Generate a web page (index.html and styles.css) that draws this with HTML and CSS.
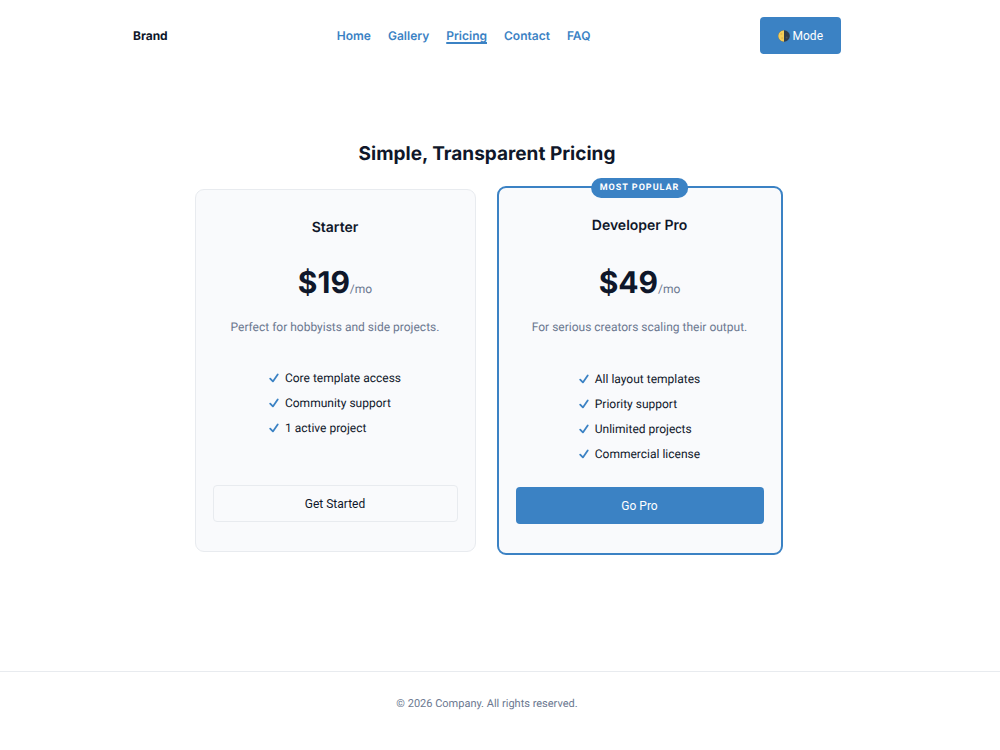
FILE: index.html
```html
<!DOCTYPE html>
<html lang="en">
<head>
<meta charset="utf-8">
<meta name="viewport" content="width=device-width, initial-scale=1">
<title>Pricing</title>
<link rel="stylesheet" href="styles.css">
</head>
<body>
<svg class="defs" width="0" height="0" aria-hidden="true">
  <symbol id="check" viewBox="0 0 10 10"><path d="M1.2 5.6 3.9 8.4 8.7 1.5" fill="none" stroke="currentColor" stroke-width="1.8" stroke-linecap="round" stroke-linejoin="round"/></symbol>
</svg>
<header class="header">
  <div class="header-inner">
    <strong class="brand">Brand</strong>
    <nav class="nav" aria-label="Main">
      <a href="#home">Home</a>
      <a href="#gallery">Gallery</a>
      <a href="#pricing" class="active" aria-current="page">Pricing</a>
      <a href="#contact">Contact</a>
      <a href="#faq">FAQ</a>
    </nav>
    <button class="btn btn-primary mode" type="button">
      <svg class="moon" viewBox="0 0 12 12" aria-hidden="true"><circle cx="6" cy="6" r="5.8" fill="#2f3b4c"/><path d="M6 .2a5.8 5.8 0 0 0 0 11.6z" fill="#f5cd58"/><circle cx="3.4" cy="4" r="1" fill="#e3b84c"/><circle cx="4.2" cy="8.2" r="1.1" fill="#e3b84c"/><circle cx="8.6" cy="7.6" r="1" fill="#465160"/></svg>
      Mode
    </button>
  </div>
</header>
<main class="main">
  <h1 class="title">Simple, Transparent Pricing</h1>
  <div class="plans">
    <section class="card">
      <h2 class="plan-name">Starter</h2>
      <p class="price">$19<span class="period">/mo</span></p>
      <p class="summary">Perfect for hobbyists and side projects.</p>
      <ul class="features">
        <li><svg class="check" aria-hidden="true"><use href="#check"/></svg>Core template access</li>
        <li><svg class="check" aria-hidden="true"><use href="#check"/></svg>Community support</li>
        <li><svg class="check" aria-hidden="true"><use href="#check"/></svg>1 active project</li>
      </ul>
      <button class="btn btn-outline" type="button">Get Started</button>
    </section>
    <section class="card card-featured">
      <span class="badge">MOST POPULAR</span>
      <h2 class="plan-name">Developer Pro</h2>
      <p class="price">$49<span class="period">/mo</span></p>
      <p class="summary">For serious creators scaling their output.</p>
      <ul class="features">
        <li><svg class="check" aria-hidden="true"><use href="#check"/></svg>All layout templates</li>
        <li><svg class="check" aria-hidden="true"><use href="#check"/></svg>Priority support</li>
        <li><svg class="check" aria-hidden="true"><use href="#check"/></svg>Unlimited projects</li>
        <li><svg class="check" aria-hidden="true"><use href="#check"/></svg>Commercial license</li>
      </ul>
      <button class="btn btn-primary" type="button">Go Pro</button>
    </section>
  </div>
</main>
<footer class="footer">© 2026 Company. All rights reserved.</footer>
</body>
</html>
```
FILE: styles.css
```css
:root {
  --blue: #3b82c4;
  --ink: #0f172a;
  --muted: #6b7890;
  --line: #e8ebef;
  --surface: #f9fafc;
  --gutter-end: 26px;
  --heading-font: Inter, sans-serif;
}

* { box-sizing: border-box; }

body {
  margin: 0;
  min-height: 100vh;
  display: flex;
  flex-direction: column;
  background: #fff;
  color: var(--ink);
  font: 12px/18px Roboto, sans-serif;
  text-rendering: geometricPrecision;
}

h1, h2, p, ul { margin: 0; padding: 0; }

.defs { position: absolute; }

.header { padding: 17px var(--gutter-end) 17px 0; }

.header-inner {
  max-width: 708px;
  margin: 0 auto;
  display: flex;
  align-items: center;
  justify-content: space-between;
}

.brand, .nav, .title, .plan-name, .price { font-family: var(--heading-font); }

.brand { font-weight: 700; }

.nav { display: flex; gap: 17px; }

.nav a {
  color: var(--blue);
  font-weight: 600;
  text-decoration: none;
}

.nav .active {
  text-decoration: underline;
  text-decoration-thickness: 2px;
  text-underline-offset: 2px;
  text-decoration-skip-ink: none;
}

.btn {
  display: flex;
  align-items: center;
  justify-content: center;
  gap: 3px;
  width: 100%;
  height: 37px;
  padding: 0 17px;
  border: 1px solid transparent;
  border-radius: 4px;
  font: inherit;
  cursor: pointer;
}

.btn-primary { background: var(--blue); color: #fff; }
.btn-outline { background: transparent; border-color: var(--line); color: var(--ink); }

.mode { width: auto; }
.moon { width: 12px; height: 12px; }

.main {
  flex: 1;
  padding: 68px var(--gutter-end) 24px 0;
}

.title {
  font-size: 19px;
  line-height: 30px;
  font-weight: 700;
  text-align: center;
}

.plans {
  display: flex;
  flex-wrap: wrap;
  justify-content: center;
  align-items: center;
  gap: 21px;
  margin-top: 17px;
  padding-left: 3px;
}

.card {
  position: relative;
  display: flex;
  flex-direction: column;
  align-items: center;
  width: 281px;
  min-height: 363px;
  padding: 27px 17px 29px;
  border: 1px solid var(--line);
  border-radius: 9px;
  background: var(--surface);
}

.card-featured {
  width: 286px;
  min-height: 369px;
  border: 2px solid var(--blue);
}

.badge {
  position: absolute;
  top: -10px;
  left: 50%;
  transform: translateX(-50%);
  padding: 2px 9px;
  border-radius: 10px;
  background: var(--blue);
  color: #fff;
  font-size: 9px;
  line-height: 16px;
  font-weight: 700;
  letter-spacing: 1px;
  white-space: nowrap;
}

.plan-name { font-size: 14px; line-height: 21px; font-weight: 600; }

.price {
  margin-top: 23px;
  font-size: 30px;
  line-height: 44px;
  font-weight: 700;
}

.period { font-family: Roboto, sans-serif; font-size: 12px; font-weight: 400; color: var(--muted); }

.summary { margin-top: 7px; color: var(--muted); }

.features {
  display: grid;
  gap: 7px;
  margin: 33px 0 24px;
  list-style: none;
}

.card-featured .price { margin-top: 25px; }
.card-featured .features { margin: 34px 0 23px; }

.features li { display: flex; align-items: center; gap: 6px; }

.check { width: 10px; height: 10px; color: var(--blue); }

.card .btn { margin-top: auto; }

.footer {
  padding: 23px var(--gutter-end) 37px 0;
  border-top: 1px solid var(--line);
  color: var(--muted);
  font-size: 11px;
  text-align: center;
}
```
